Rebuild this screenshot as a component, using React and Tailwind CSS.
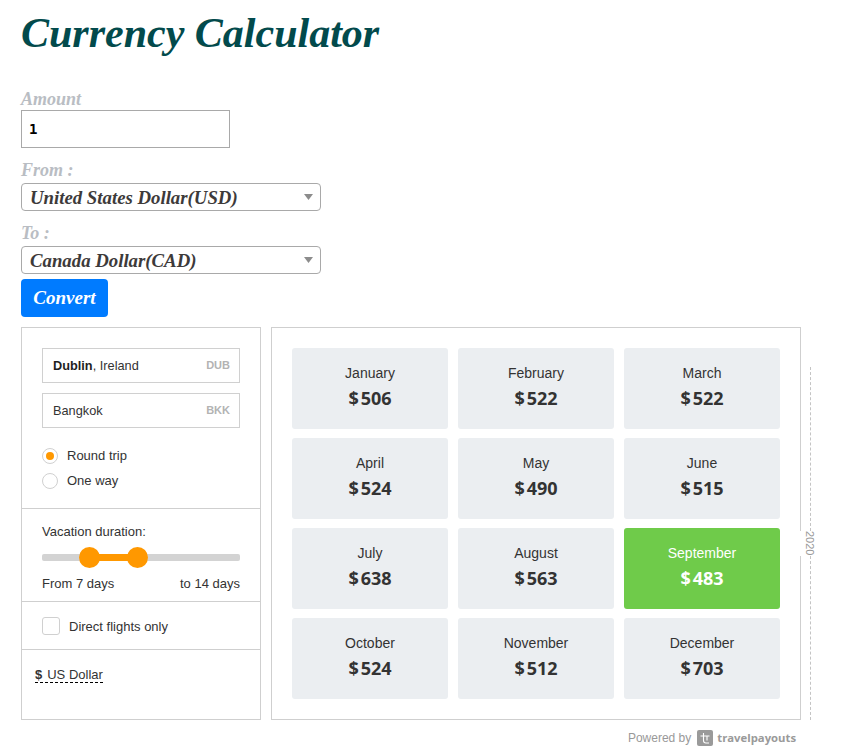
const display = "font-['Liberation_Serif',serif] italic";
const arial = "font-['Liberation_Sans',Arial,sans-serif]";
const months = [
  ["January", 506], ["February", 522], ["March", 522],
  ["April", 524], ["May", 490], ["June", 515],
  ["July", 638], ["August", 563], ["September", 483],
  ["October", 524], ["November", 512], ["December", 703],
];

function Select({ label }) {
  return (
    <div className="w-[300px] h-[28px] border border-[#a9a9a9] rounded-[4px] bg-white flex items-center justify-between pl-2 pr-[7px]">
      <span className={`${display} pt-[2px] text-[18.8px] font-semibold text-[#3d3a3a] leading-none`}>{label}</span>
      <svg width="9" height="6" viewBox="0 0 9 6"><path d="M0 0h9L4.5 6z" fill="#8c8c8c" /></svg>
    </div>
  );
}

function Field({ children, code }) {
  return (
    <div className="h-[35px] border border-[#d0d0d0] flex items-center justify-between pl-[10px] pr-[9px] text-[12.75px] text-[#333]">
      <span>{children}</span>
      <span className="text-[11px] font-bold text-[#b3b3b3]">{code}</span>
    </div>
  );
}

function Logo() {
  return (
    <svg width="16" height="16" viewBox="0 0 16 16" className="block">
      <rect width="16" height="16" rx="2" fill="#9a9a9a" />
      <path d="M3.5 6h9M6.5 3v7.5c0 1.6 1 2.5 2.5 2.5h3M10 6v4.5" stroke="#fff" strokeWidth="1.1" fill="none" />
    </svg>
  );
}

export default function App() {
  return (
    <div className="w-[845px] h-[755px] bg-white pl-[21px] overflow-hidden">
      <h1 className={`${display} font-bold text-[42px] leading-[56px] pt-[5px] h-[89px] text-[#024a4c]`}>Currency Calculator</h1>
      <div className={`${display} font-bold text-[18px] leading-[20px] h-[21px] text-[#b9bdc3]`}>Amount</div>
      <input
        readOnly
        defaultValue="1"
        className="block w-[209px] h-[38px] border border-[#a9a9a9] px-[7px] font-['DejaVu_Sans_Mono',monospace] font-bold text-[14px] text-black outline-none"
      />
      <div className={`${display} font-bold text-[18px] leading-[20px] h-[35px] pt-[12px] text-[#b9bdc3] box-border`}>From :</div>
      <Select label="United States Dollar(USD)" />
      <div className={`${display} font-bold text-[18px] leading-[20px] h-[35px] pt-[12px] text-[#b9bdc3] box-border`}>To :</div>
      <Select label="Canada Dollar(CAD)" />
      <button className={`${display} block mt-[5px] w-[87px] h-[38px] rounded-[4px] bg-[#007bff] text-white font-bold text-[19px]`}>Convert</button>

      <div className={`${arial} mt-[10px] flex items-stretch`}>
        <div className="w-[240px] h-[393px] border border-[#cfcfcf] flex flex-col text-[#333] text-[13px]">
          <div className="h-[181px] border-b border-[#cfcfcf] px-5 pt-5">
            <Field code="DUB"><b className="text-[#1f1f1f]">Dublin</b>, Ireland</Field>
            <div className="h-[10px]" />
            <Field code="BKK">Bangkok</Field>
            <div className="mt-[20px] flex items-center h-[16px] gap-[9px]">
              <span className="w-[16px] h-[16px] rounded-full border border-[#d0d0d0] flex items-center justify-center">
                <span className="w-[8px] h-[8px] rounded-full bg-[#ff9800]" />
              </span>
              <span>Round trip</span>
            </div>
            <div className="mt-[9px] flex items-center h-[16px] gap-[9px]">
              <span className="w-[16px] h-[16px] rounded-full border border-[#d0d0d0]" />
              <span>One way</span>
            </div>
          </div>
          <div className="h-[93px] border-b border-[#cfcfcf] px-5 pt-[15px]">
            <div className="leading-[16px]">Vacation duration:</div>
            <div className="relative h-[21px] mt-[7px] flex items-center">
              <div className="w-full h-[7px] rounded-[2px] bg-[#d3d3d3]" />
              <div className="absolute left-[47px] w-[48px] h-[7px] bg-[#ff9800]" />
              <div className="absolute left-[37px] w-[21px] h-[21px] rounded-full bg-[#ff9800]" />
              <div className="absolute left-[85px] w-[21px] h-[21px] rounded-full bg-[#ff9800]" />
            </div>
            <div className="mt-[8px] flex justify-between leading-[16px]">
              <span>From 7 days</span>
              <span>to 14 days</span>
            </div>
          </div>
          <div className="h-[48px] border-b border-[#cfcfcf] px-5 flex items-center gap-[9px]">
            <span className="w-[18px] h-[18px] rounded-[3px] border border-[#d0d0d0]" />
            <span className="pt-[2px]">Direct flights only</span>
          </div>
          <div className="pl-[13px] pt-[15px]">
            <span className="inline-block leading-[15px] border-b border-dashed border-black">
              <b className="mr-[5px]">$</b>US Dollar
            </span>
          </div>
        </div>

        <div className="ml-[10px] w-[530px] h-[393px] border border-[#cfcfcf] p-5 pb-0">
          <div className="grid grid-cols-3 gap-x-[10px] gap-y-[9px]">
            {months.map(([name, price]) => {
              const hot = name === "September";
              return (
                <div
                  key={name}
                  className={`h-[81px] rounded-[3px] flex flex-col items-center pt-[17px] ${hot ? "bg-[#6fcb4a] text-white" : "bg-[#ebeef1] text-[#333]"}`}
                >
                  <div className="text-[14px] leading-[16px]">{name}</div>
                  <div className="mt-[5px] font-['Open_Sans',sans-serif] font-bold text-[18px] leading-[24px]">
                    <span className="mr-[2px]">$</span>{price}
                  </div>
                </div>
              );
            })}
          </div>
        </div>

        <div className="ml-[9px] h-[393px] w-[1px] flex flex-col items-center pt-[40px]">
          <div className="flex-1 border-l border-dashed border-[#c4c4c4]" />
          <div className="[writing-mode:vertical-rl] text-[11px] leading-none text-[#999] py-[5px] -translate-x-px bg-white">2020</div>
          <div className="flex-1 border-l border-dashed border-[#c4c4c4]" />
        </div>
      </div>

      <div className="w-[775px] mt-[10px] flex justify-end items-center h-[16px]">
        <span className={`${arial} text-[12px] text-[#999]`}>Powered by</span>
        <span className="ml-[6px]"><Logo /></span>
        <span className="ml-[4px] font-['Open_Sans',sans-serif] font-bold text-[11.3px] text-[#9a9a9a]">travelpayouts</span>
      </div>
    </div>
  );
}
